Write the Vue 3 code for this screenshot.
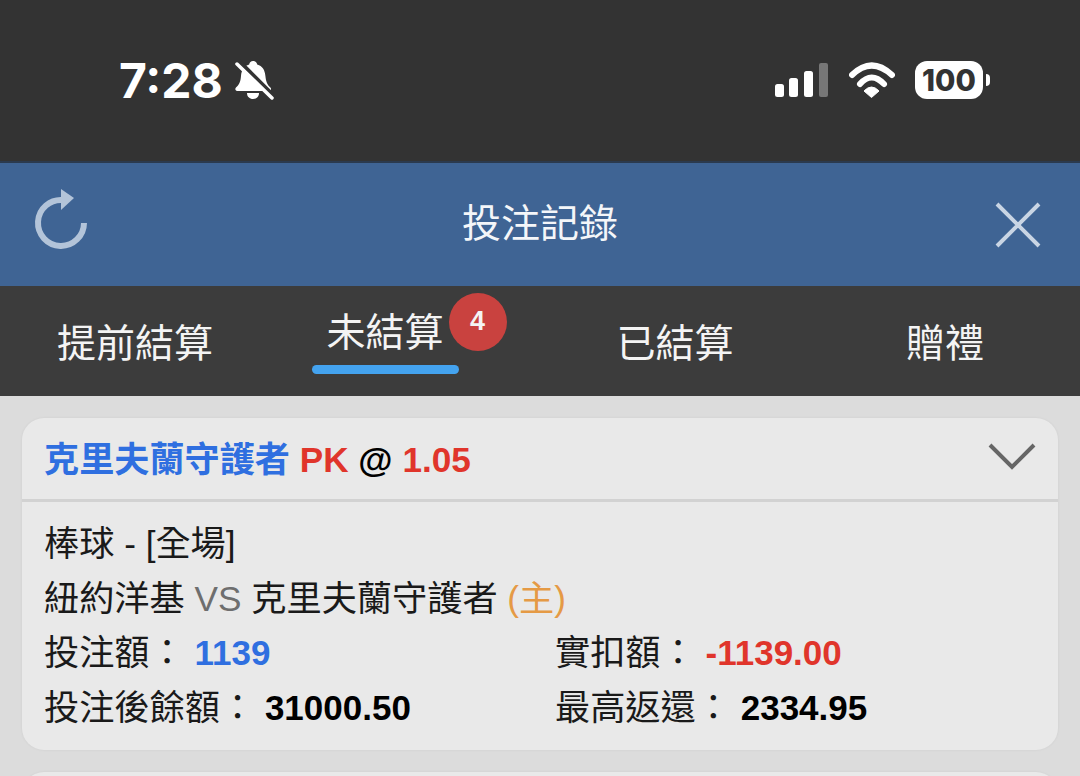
<template>
  <div class="page">
    <!-- 手機狀態列 -->
    <div class="status-bar">
      <div class="status-left">
        <span class="time">7:28</span>
        <svg class="bell" viewBox="234 58 40 44" width="40" height="44">
          <path d="M253 61c-2 0-3.500 1.500-3.800 3.500C244 66 241.500 70 241 76c-.4 6-2 9-5 11.500-1.200 1-.8 3.500 1.200 3.500h32c2 0 2.400-2.500 1.200-3.500-3-2.500-4.400-5.500-5-11.500-.5-6-3-10-8.200-11.500C256.900 62.500 255 61 253 61z" fill="#fff" />
          <path d="M247 93h12c0 3.500-2.500 6-6 6s-6-2.500-6-6z" fill="#fff" />
          <path d="M239 61l35 35" stroke="#333" stroke-width="4" />
          <path d="M237 64l35 34" stroke="#fff" stroke-width="3.500" stroke-linecap="round" />
        </svg>
      </div>
      <div class="status-right">
        <svg class="signal" viewBox="775 63 53 34" width="53" height="34">
          <rect x="775" y="84" width="9" height="13" rx="2.500" fill="#fff" />
          <rect x="789" y="78" width="9" height="19" rx="2.500" fill="#fff" />
          <rect x="804" y="71" width="9" height="26" rx="2.500" fill="#fff" />
          <rect x="819" y="63" width="9" height="34" rx="2" fill="#777" />
        </svg>
        <svg class="wifi" viewBox="849 62 46 36" width="46" height="36">
          <path d="M852 75Q871.500 56 892 75" fill="none" stroke="#fff" stroke-width="6" stroke-linecap="round" />
          <path d="M860 84Q871.500 71 884 84" fill="none" stroke="#fff" stroke-width="6" stroke-linecap="round" />
          <path d="M864 91Q871.500 83 879 91L871.500 97.500Z" fill="#fff" stroke="#fff" stroke-linejoin="round" />
        </svg>
        <div class="battery">
          <span class="battery-body">100</span>
          <span class="battery-nub"></span>
        </div>
      </div>
    </div>

    <!-- 標題列 -->
    <header class="title-bar">
      <svg class="refresh" viewBox="31 187 60 66" width="60" height="66">
        <path d="M82 223A23 23 0 1 1 61 200" fill="none" stroke="#b3c4d9" stroke-width="6" />
        <path d="M59 189L72 198L59 210Z" fill="#b3c4d9" />
      </svg>
      <h1>投注記錄</h1>
      <svg class="close" viewBox="994 200 48 48" width="48" height="48">
        <path d="M997 203L1039 245M1039 203L997 245" stroke="#c9d5e4" stroke-width="4" />
      </svg>
    </header>

    <!-- 分頁 -->
    <nav class="tabs">
      <div v-for="tab in tabs" :key="tab.name" class="tab">
        <span v-if="!tab.active">{{ tab.name }}</span>
        <span v-else class="tab-active">
          {{ tab.name }}
          <i class="badge">{{ tab.count }}</i>
        </span>
      </div>
    </nav>

    <main class="list">
      <section class="card">
        <div class="card-head">
          <div class="head-title">
            <span class="blue">克里夫蘭守護者</span>
            <span class="red"> PK</span>
            <span class="at"> @ </span>
            <span class="red">1.05</span>
          </div>
          <svg class="chevron" viewBox="988 446 50 30" width="50" height="30">
            <path d="M991 449L1013 471L1035 449" fill="none" stroke="#666" stroke-width="4" />
          </svg>
        </div>
        <div class="card-body">
          <div class="row">棒球 - [全場]</div>
          <div class="row">紐約洋基 <span class="vs">VS</span> 克里夫蘭守護者 <span class="home">(主)</span></div>
          <div class="grid">
            <div class="row">投注額： <b class="blue">1139</b></div>
            <div class="row">實扣額： <b class="red">-1139.00</b></div>
            <div class="row">投注後餘額： <b>31000.50</b></div>
            <div class="row">最高返還： <b>2334.95</b></div>
          </div>
        </div>
      </section>
      <section class="card card-next"></section>
    </main>
  </div>
</template>

<script setup>
const tabs = [
  { name: '提前結算' },
  { name: '未結算', active: true, count: 4 },
  { name: '已結算' },
  { name: '贈禮' }
]
</script>

<style>
html,
body {
  margin: 0;
  overflow: hidden;
}
</style>

<style scoped>
.page {
  height: 776px;
  overflow: hidden;
  background: #dcdcdc;
  color: #1a1a1a;
  font-family: "Liberation Sans", "Noto Sans CJK TC", sans-serif;
}

.status-bar {
  height: 163px;
  box-sizing: border-box;
  background: #333;
  border-bottom: 2px solid #2b3a4e;
  display: flex;
  justify-content: space-between;
  padding: 58px 90px 0 119px;
}

.status-left {
  display: flex;
  align-items: flex-start;
  gap: 11px;
}

.time {
  font-family: Inter, sans-serif;
  font-weight: 700;
  font-size: 48px;
  line-height: 46px;
  color: #fff;
}

.status-right {
  display: flex;
  align-items: flex-start;
}

.signal {
  margin: 5px 21px 0 0;
}

.wifi {
  margin: 4px 20px 0 0;
}

.battery {
  display: flex;
  align-items: center;
  height: 38px;
  margin-top: 3px;
}

.battery-body {
  width: 68px;
  height: 38px;
  border-radius: 12px;
  background: #fff;
  color: #333;
  font-family: Inter, sans-serif;
  font-weight: 800;
  font-size: 29.500px;
  line-height: 38px;
  text-align: center;
}

.battery-nub {
  width: 4px;
  height: 12px;
  margin-left: 3px;
  border-radius: 0 4px 4px 0;
  background: #fff;
}

.title-bar {
  height: 123px;
  background: #3f6494;
  display: grid;
  grid-template-columns: 1fr auto 1fr;
  align-items: center;
  padding: 0 38px;
}

.title-bar h1 {
  margin: 0;
  padding-bottom: 10px;
  font-size: 39px;
  font-weight: 400;
  color: #f4f6f9;
}

.refresh {
  margin: 0 0 9px -5px;
}

.close {
  justify-self: end;
  margin-top: 1px;
}

.tabs {
  height: 110px;
  background: #3c3c3c;
  display: grid;
  grid-template-columns: repeat(4, 270px);
  color: #f4f4f4;
  font-size: 39px;
}

.tab {
  display: flex;
  align-items: center;
  justify-content: center;
  padding-bottom: 2px;
}

.tab-active {
  position: relative;
  box-sizing: border-box;
  width: 147px;
  margin: 0 40px 0 0;
  padding-bottom: 14px;
  line-height: 58px;
  text-align: center;
}

.tab-active::after {
  content: "";
  position: absolute;
  left: 0;
  right: 0;
  bottom: 2px;
  height: 9px;
  border-radius: 5px;
  background: #44a3ef;
}

.badge {
  position: absolute;
  left: 137px;
  top: -11px;
  width: 58px;
  height: 58px;
  border-radius: 50%;
  background: #c9423f;
  font-family: "Liberation Sans", sans-serif;
  font-style: normal;
  font-weight: 700;
  font-size: 27px;
  line-height: 56px;
  text-align: center;
}

.list {
  padding: 22px;
  display: flex;
  flex-direction: column;
  gap: 22px;
}

.card {
  background: #e9e9e9;
  border-radius: 22px;
  box-shadow: 0 0 3px rgba(0, 0, 0, 0.06);
}

.card-next {
  height: 200px;
  flex-shrink: 0;
}

.card-head {
  height: 84px;
  box-sizing: border-box;
  display: flex;
  align-items: center;
  justify-content: space-between;
  padding: 0 21px 4px 22px;
  border-bottom: 3px solid #d2d2d2;
}

.head-title {
  font-size: 35.150px;
  font-weight: 700;
  white-space: pre-wrap;
}

.at {
  color: #000;
}

.chevron {
  margin-top: 1px;
}

.card-body {
  padding: 15px 22px 14px;
}

.row {
  font-size: 35.200px;
  line-height: 54.700px;
  white-space: nowrap;
}

.grid {
  display: grid;
  grid-template-columns: 511px 1fr;
}

.row b {
  font-size: 35px;
  color: #000;
}

.row b.blue {
  color: #2f6fe0;
}

.row b.red {
  color: #e0352b;
}

.blue {
  color: #2f6fe0;
}

.red {
  color: #e0352b;
}

.vs {
  color: #6e6e6e;
}

.home {
  color: #e59a45;
}
</style>
